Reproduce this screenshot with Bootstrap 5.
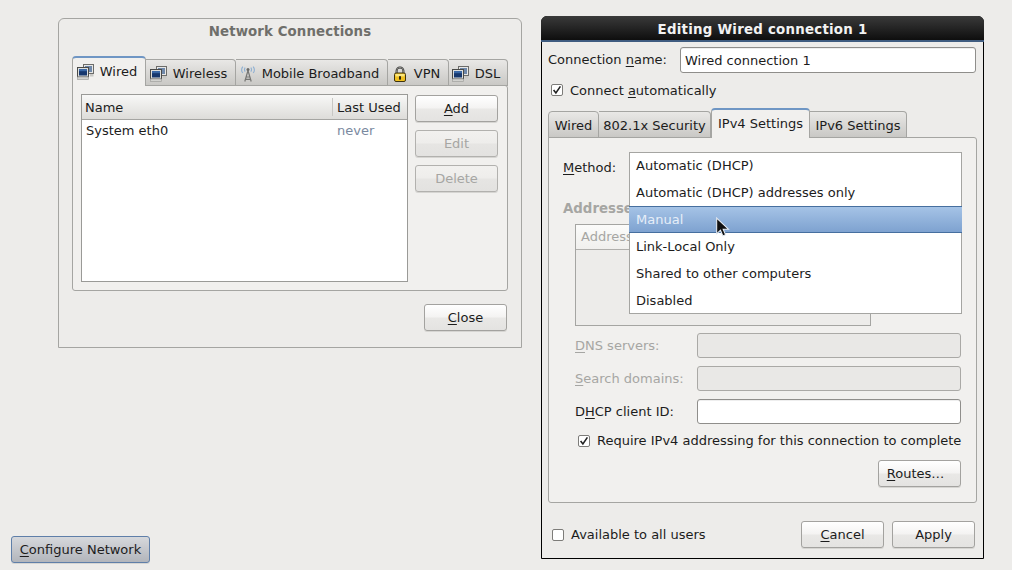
<!DOCTYPE html>
<html lang="en">
<head>
<meta charset="utf-8">
<title>Network Connections</title>
<link href="https://cdn.jsdelivr.net/npm/bootstrap@5.3.0/dist/css/bootstrap.min.css" rel="stylesheet">
<style>
html,body{height:100%;}
body{background:#edecea;color:#1c1c1c;font-family:"DejaVu Sans",sans-serif;font-size:13px;line-height:20px;overflow:hidden;}
.desk{position:relative;width:1012px;height:570px;}
u{text-decoration-thickness:1px;text-underline-offset:2px;}
/* windows on the desktop */
.win-a{position:absolute;left:58px;top:18px;width:464px;height:330px;border:1px solid #a5a5a2;border-radius:6px 6px 0 0;background:#edecea;padding:0 13px;}
.win-a-title{height:37px;padding-top:3px;text-align:center;font-weight:700;color:#6f6f6b;line-height:20px;font-size:13.33px;letter-spacing:.1px;}
.win-b{position:absolute;left:541px;top:16px;width:443px;height:543px;border:1px solid #000;border-radius:6px 6px 0 0;background:#edecea;}
.win-b-title{height:26px;margin:-1px -1px 0;background:linear-gradient(#3a3a3a,#0e0e0e);border-bottom:2px solid #3f5c80;border-radius:6px 6px 0 0;color:#f2f2f2;font-weight:700;font-size:13.33px;text-align:center;line-height:28px;letter-spacing:.25px;}
.conf-btn{position:absolute;left:11px;top:536px;width:139px;height:28px;}
/* buttons */
.gbtn.btn{--bs-btn-padding-x:0;--bs-btn-padding-y:0;--bs-btn-font-size:13px;--bs-btn-line-height:25px;--bs-btn-border-radius:3px;--bs-btn-border-color:#a3a29f;--bs-btn-color:#1c1c1c;width:83px;height:27px;background:linear-gradient(#fff 0,#f4f3f2 48%,#e9e8e6 52%,#e4e3e1 100%);box-shadow:0 1px 0 #d6d5d2;}
.gbtn.btn:disabled{opacity:1;color:#a6a6a3;background:linear-gradient(#f2f1ef 0,#eeedeb 48%,#e6e5e3 52%,#e3e2e0 100%);border-color:#b2b1ae;}
.conf-btn.gbtn.btn{width:139px;background:linear-gradient(#d6d8dc,#b2b5bb);border-color:#5f7fa9;}
.gbtn.btn.routes{padding-right:8px;}
/* tabs */
.tabrow.nav{flex-wrap:nowrap;align-items:flex-end;position:relative;z-index:1;margin-bottom:-1px;}
.gtab{display:flex;align-items:center;justify-content:center;gap:6px;height:27px;padding-top:2px;border:1px solid #a5a5a2;border-left-width:0;border-radius:0 4px 0 0;background:linear-gradient(#e9e8e6,#c9c8c5);white-space:nowrap;color:#1c1c1c;}
.gtab.with-icon{padding-right:4px;}
.gtab:first-child{border-left-width:1px;border-radius:4px 4px 0 0;}
.gtab.onb{height:30px;padding-top:0;padding-bottom:1px;border:1px solid #a5a5a2;border-top:2px solid #6f96c4;border-bottom:0;border-radius:4px 4px 0 0;background:#f1f0ee;}
.gpanel{border:1px solid #a5a5a2;border-radius:0 3px 3px 3px;background:#f1f0ee;}
/* tree */
.tree{border:1px solid #9a9a97;background:#fff;}
.treehead{display:flex;height:25px;border-bottom:1px solid #a5a5a2;background:linear-gradient(#f8f8f7,#dddcd9);line-height:26px;}
.treerow{display:flex;height:24px;line-height:22px;}
.cola{width:250px;padding-left:3px;}
.colb{flex:1;border-left:1px solid #c8c7c4;padding-left:4px;margin:3px 0;line-height:20px;}
.colc{padding-left:5px;color:#7a89a0;}
/* entries */
.gentry.form-control{height:26px;padding:0 4px;border:1px solid #8f8e8b;border-radius:3px;background:#fff;color:#1c1c1c;font-size:13px;line-height:24px;box-shadow:inset 0 1px 0 #eee;}
.gentry.form-control:disabled{background:#e9e8e6;border-color:#aaa9a6;box-shadow:none;}
.fieldrow{height:25px;padding-left:12px;display:flex;align-items:center;}
.fieldrow .lbl{width:122px;}
.fieldrow .gentry.form-control{width:264px;height:25px;}
.muted{color:#a6a6a3;}
/* checks */
.gcheck.form-check-input{width:12px;height:12px;margin:0;flex:none;border:1px solid #7d7c79;border-radius:2px;background-color:#fff;background-size:10px 10px;}
.gcheck.form-check-input:checked{background-color:#fff;border-color:#7d7c79;background-image:url("data:image/svg+xml,%3csvg xmlns='http://www.w3.org/2000/svg' viewBox='0 0 10 10'%3e%3cpath fill='none' stroke='%23222' stroke-width='1.6' d='M1.6 5l2.3 3L8.4 1.4'/%3e%3c/svg%3e");}
.autotext{padding-top:1px;}
/* combo list */
.methodrow{position:relative;height:26px;line-height:28px;}
.combo.dropdown-menu{--bs-dropdown-padding-y:0;--bs-dropdown-border-radius:0;--bs-dropdown-border-color:#a5a5a2;--bs-dropdown-font-size:13px;--bs-dropdown-item-padding-x:6px;--bs-dropdown-item-padding-y:0;--bs-dropdown-link-color:#1c1c1c;--bs-dropdown-link-active-color:#e6eef8;position:absolute;left:66px;top:-2px;width:333px;height:162px;z-index:5;display:block;box-shadow:none;min-width:0;}
.combo .dropdown-item{height:27px;line-height:27px;}
.combo li:first-child .dropdown-item{height:26px;line-height:25px;}
.combo li:last-child .dropdown-item{height:26px;line-height:27px;}
.combo .dropdown-item.active{margin:0 -1px;width:calc(100% + 2px);padding-left:7px;line-height:25px;background:linear-gradient(#a5c3e6,#7ea2d0);border-top:1px solid #466f9f;border-bottom:1px solid #466f9f;}
.pointer{position:absolute;left:715px;top:217px;z-index:9;}
.addr-title{height:20px;margin-top:19px;font-weight:700;color:#a6a6a3;padding-left:0;font-size:13.33px;}
.addr-box{width:296px;height:102px;margin:5px 0 0 12px;border:1px solid #a5a5a2;background:#edecea;}
.addr-head{height:25px;padding-left:5px;line-height:23px;color:#a6a6a3;background:linear-gradient(#fbfbfa,#f0efed);border-bottom:1px solid #b0afac;}
</style>
</head>
<body>
<svg width="0" height="0" class="d-none" aria-hidden="true">
  <symbol id="ic-net" viewBox="0 0 17 17">
    <rect x="6.5" y="1.5" width="10" height="9" fill="#e8e8e6" stroke="#6c6c6a"/>
    <rect x="8" y="3" width="7" height="6" fill="#6f88aa"/>
    <rect x="13" y="11" width="3.5" height="2.5" fill="#c8c8c5"/>
    <rect x=".5" y="4.5" width="11" height="9.5" fill="#dedfdd" stroke="#4a4a48"/>
    <rect x="2" y="6" width="8" height="6.5" fill="#17386e"/>
    <rect x="2" y="6" width="8" height="2.2" fill="#3a68a6"/>
    <rect x=".5" y="14" width="11" height="2.5" fill="#d2d2cf" stroke="#a0a09d" stroke-width=".7"/>
  </symbol>
  <symbol id="ic-ant" viewBox="0 0 16 16">
    <path d="M8 4.5L4.8 15.5M8 4.5l3.2 11M6.3 11h3.4M5.6 13.3h4.8" fill="none" stroke="#767674" stroke-width="1.2"/>
    <circle cx="8" cy="3.6" r="1.5" fill="#6a6a68"/>
    <path d="M5.2 1.6c-.9 1.2-.9 2.8 0 4M10.8 1.6c.9 1.2.9 2.8 0 4M2.8.6c-1.4 2-1.4 4.6 0 6.4M13.2.6c1.4 2 1.4 4.6 0 6.4" fill="none" stroke="#8fb0d2" stroke-width="1.1"/>
  </symbol>
  <symbol id="ic-lock" viewBox="0 0 16 16">
    <path d="M4.6 8V4.8a3.4 3.4 0 0 1 6.8 0V8" fill="none" stroke="#2e2e2c" stroke-width="2"/>
    <path d="M4.6 8V4.8a3.4 3.4 0 0 1 6.8 0V8" fill="none" stroke="#b5b5b2" stroke-width=".7"/>
    <rect x="2.5" y="7" width="11" height="8.5" rx="1.5" fill="#f0c020" stroke="#3c3210"/>
    <rect x="3.5" y="8" width="9" height="2.4" fill="#fbe67e"/>
    <rect x="7" y="10.2" width="2" height="3.4" fill="#2e260c"/>
  </symbol>
</svg>

<div class="desk">

  <section class="win-a">
    <div class="win-a-title">Network Connections</div>
    <nav class="tabrow nav">
      <div class="gtab onb with-icon" style="width:74px"><svg width="17" height="17"><use href="#ic-net"/></svg>Wired</div>
      <div class="gtab with-icon" style="width:90px"><svg width="17" height="17"><use href="#ic-net"/></svg>Wireless</div>
      <div class="gtab with-icon" style="width:152px"><svg width="16" height="16"><use href="#ic-ant"/></svg>Mobile Broadband</div>
      <div class="gtab with-icon" style="width:61px"><svg width="16" height="16"><use href="#ic-lock"/></svg>VPN</div>
      <div class="gtab with-icon" style="width:59px"><svg width="17" height="17"><use href="#ic-net"/></svg>DSL</div>
    </nav>
    <div class="gpanel d-flex" style="height:206px;padding:8px;">
      <div class="tree" style="width:327px;height:188px;">
        <div class="treehead"><div class="cola">Name</div><div class="colb">Last Used</div></div>
        <div class="treerow"><div class="cola" style="padding-left:4px">System eth0</div><div class="colc">never</div></div>
      </div>
      <div class="d-flex flex-column" style="margin:1px 0 0 7px;gap:8px;">
        <button class="btn gbtn" type="button"><u>A</u>dd</button>
        <button class="btn gbtn" type="button" disabled>Edit</button>
        <button class="btn gbtn" type="button" disabled>Delete</button>
      </div>
    </div>
    <div class="d-flex justify-content-end" style="margin-top:13px;padding-right:1px;">
      <button class="btn gbtn" type="button"><u>C</u>lose</button>
    </div>
  </section>

  <section class="win-b">
    <div class="win-b-title">Editing Wired connection 1</div>
    <div class="d-flex align-items-center" style="margin:5px 7px 0 6px;height:26px;">
      <div style="width:132px">Connection <u>n</u>ame:</div>
      <input class="gentry form-control" style="width:296px" value="Wired connection 1">
    </div>
    <div class="d-flex align-items-center" style="margin:4px 0 0 9px;height:26px;gap:7px;">
      <input class="gcheck form-check-input" type="checkbox" checked>
      <div class="autotext">Connect <u>a</u>utomatically</div>
    </div>
    <div style="margin:5px 6px 0 6px;">
      <nav class="tabrow nav">
        <div class="gtab" style="width:51px">Wired</div>
        <div class="gtab" style="width:112px">802.1x Security</div>
        <div class="gtab onb" style="width:99px">IPv4 Settings</div>
        <div class="gtab" style="width:97px">IPv6 Settings</div>
      </nav>
      <div class="gpanel" style="height:366px;padding:16px 15px 0 14px;">
        <div class="methodrow">
          <u>M</u>ethod:
          <ul class="combo dropdown-menu">
            <li><span class="dropdown-item">Automatic (DHCP)</span></li>
            <li><span class="dropdown-item">Automatic (DHCP) addresses only</span></li>
            <li><span class="dropdown-item active">Manual</span></li>
            <li><span class="dropdown-item">Link-Local Only</span></li>
            <li><span class="dropdown-item">Shared to other computers</span></li>
            <li><span class="dropdown-item">Disabled</span></li>
          </ul>
        </div>
        <div class="addr-title">Addresses</div>
        <div class="addr-box"><div class="addr-head">Address</div></div>
        <div class="fieldrow" style="margin-top:7px;">
          <div class="lbl muted"><u>D</u>NS servers:</div>
          <input class="gentry form-control" disabled>
        </div>
        <div class="fieldrow" style="margin-top:8px;">
          <div class="lbl muted"><u>S</u>earch domains:</div>
          <input class="gentry form-control" disabled>
        </div>
        <div class="fieldrow" style="margin-top:8px;">
          <div class="lbl">D<u>H</u>CP client ID:</div>
          <input class="gentry form-control">
        </div>
        <div class="d-flex align-items-center" style="margin:7px 0 0 15px;height:20px;gap:7px;white-space:nowrap;">
          <input class="gcheck form-check-input" type="checkbox" checked>
          <div>Require IPv4 addressing for this connection to complete</div>
        </div>
        <div class="d-flex justify-content-end" style="margin-top:9px;">
          <button class="btn gbtn routes" type="button"><u>R</u>outes…</button>
        </div>
      </div>
    </div>
    <div class="d-flex align-items-center" style="margin:18px 8px 0 10px;height:27px;">
      <input class="gcheck form-check-input" type="checkbox">
      <div class="flex-grow-1" style="margin-left:7px;">Available to all users</div>
      <button class="btn gbtn" type="button"><u>C</u>ancel</button>
      <button class="btn gbtn" type="button" style="margin-left:8px;">Apply</button>
    </div>
  </section>

  <button class="btn gbtn conf-btn" type="button"><u>C</u>onfigure Network</button>

  <svg class="pointer" width="17" height="21" viewBox="0 0 16 20" aria-hidden="true">
    <path d="M1.5 1v15l3.6-3.4 2.3 5.4 2.6-1.1-2.3-5.3h5z" fill="#111" stroke="#e8eef6" stroke-width="1"/>
  </svg>
</div>
</body>
</html>
